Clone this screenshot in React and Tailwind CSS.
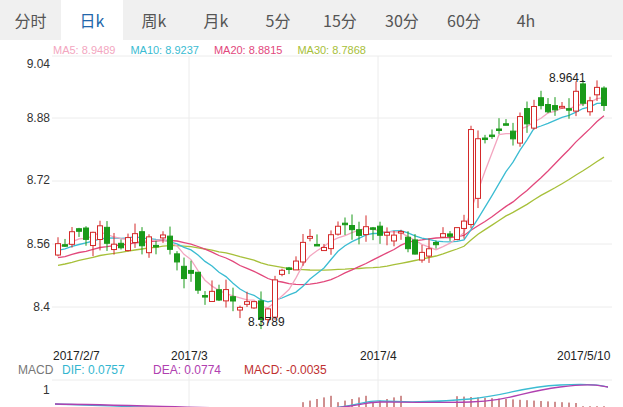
import React from "react";

const keys = [[55,8.57],[90,8.60],[120,8.57],[160,8.585],[175,8.52],[195,8.44],[230,8.42],[262,8.39],[275,8.50],[300,8.56],[340,8.60],[375,8.59],[410,8.57],[425,8.54],[440,8.60],[465,8.62],[472,8.87],[510,8.86],[530,8.92],[560,8.93],[580,8.96],[605,8.955]];
function interp(x){for(let i=0;i<keys.length-1;i++){const[a,pa]=keys[i],[b,pb]=keys[i+1];if(x<=b){return pa+(pb-pa)*(x-a)/(b-a);}}return keys[keys.length-1][1];}
let seed=7;const rnd=()=>{seed=(seed*9301+49297)%233280;return seed/233280;};
const N=79;const xs=[];const closes=[];const opens=[];const highs=[];const lows=[];
for(let i=0;i<N;i++){const x=55+i*7;xs.push(x);const base=interp(x);const c=base+(rnd()-0.5)*0.05;const o=i===0?c-0.03:closes[i-1]+(rnd()-0.5)*0.05;closes.push(c);opens.push(o);highs.push(Math.max(o,c)+rnd()*0.03);lows.push(Math.min(o,c)-rnd()*0.03);}
opens[59]=8.62;closes[59]=8.87;highs[59]=8.88;lows[59]=8.61;
const pre=[];for(let i=0;i<30;i++)pre.push(8.44+i*0.004+(i%3)*0.01);
const all=[...pre,...closes];
const ma=n=>closes.map((_,i)=>{const j=i+30;let s=0;for(let k=j-n+1;k<=j;k++)s+=all[k];return s/n;});
const Y=p=>65+(9.04-p)*379.7;
const line=arr=>arr.map((p,i)=>`${i?"L":"M"}${xs[i]+3},${Y(p).toFixed(1)}`).join(" ");
const tabs=["分时","日k","周k","月k","5分","15分","30分","60分","4h"];

export default function App(){
  const m5=ma(5),m10=ma(10),m20=ma(20),m30=ma(30);
  return(
  <div className="w-[623px] h-[407px] bg-white overflow-hidden relative" style={{fontFamily:'"Microsoft YaHei","Noto Sans CJK SC",sans-serif'}}>
    <div className="h-[40px] bg-[#f0f0f0] flex items-center text-[16px] text-[#555]">
      {tabs.map((t,i)=>(
        <div key={t} className={`h-full flex items-center justify-center ${i===1?"bg-white text-[#2266aa]":""}`} style={{width:i===0?61:62}}>{t}</div>
      ))}
    </div>
    <div className="flex gap-[15px] pl-[53px] pt-[2px] text-[11px] h-[18px]" style={{fontFamily:'"Liberation Sans",Arial,sans-serif'}}>
      <span className="text-[#f3a6c0]">MA5: 8.9489</span>
      <span className="text-[#3bbcd2]">MA10: 8.9237</span>
      <span className="text-[#e2487c]">MA20: 8.8815</span>
      <span className="text-[#a7c03a]">MA30: 8.7868</span>
    </div>
    <svg className="absolute left-0 top-0" width="623" height="407" style={{fontFamily:'"Liberation Sans",Arial,sans-serif'}}>
      {[56,118,181,244,307].map(y=><line key={y} x1="52" x2="612" y1={y} y2={y} stroke="#ececec"/>)}
      {[189,378].map(x=><line key={x} x1={x} x2={x} y1="56" y2="407" stroke="#ececec"/>)}
      <line x1="52" x2="612" y1="380" y2="380" stroke="#ececec"/>
      {[["9.04",68],["8.88",122],["8.72",184],["8.56",248],["8.4",311]].map(([t,y])=><text key={t} x="50" y={y} textAnchor="end" fontSize="12" fill="#333">{t}</text>)}
      <path d={line(m30)} fill="none" stroke="#a7c03a" strokeWidth="1.3"/>
      <path d={line(m20)} fill="none" stroke="#e2487c" strokeWidth="1.3"/>
      <path d={line(m10)} fill="none" stroke="#3bbcd2" strokeWidth="1.3"/>
      <path d={line(m5)} fill="none" stroke="#f3a6c0" strokeWidth="1.3"/>
      {xs.map((x,i)=>{const up=closes[i]>=opens[i];const col=up?"#d42a2a":"#1a9a1a";const top=Y(Math.max(opens[i],closes[i]));const bot=Y(Math.min(opens[i],closes[i]));const h=Math.max(bot-top,1.5);
        return <g key={i}><line x1={x+3} x2={x+3} y1={Y(highs[i])} y2={Y(lows[i])} stroke={col}/>
          <rect x={x+0.5} y={top} width="5" height={h} fill={up?"#fff":col} stroke={col} strokeWidth="1"/></g>;})}
      <text x="248" y="326" fontSize="12" fill="#222">8.3789</text>
      <text x="549" y="82" fontSize="12" fill="#222">8.9641</text>
      <g fontSize="12" fill="#222">
        <text x="53" y="360">2017/2/7</text><text x="171" y="360">2017/3</text><text x="360" y="360">2017/4</text><text x="557" y="360">2017/5/10</text>
      </g>
      <g fontSize="12">
        <text x="18" y="374" fill="#777">MACD</text><text x="62" y="374" fill="#33b6d0">DIF: 0.0757</text>
        <text x="153" y="374" fill="#b040b0">DEA: 0.0774</text><text x="244" y="374" fill="#c03030">MACD: -0.0035</text>
        <text x="43" y="394" fill="#333">1</text>
      </g>
      {xs.map((x,i)=>{const v=i<35?-2-(i%4):i<50?6+(i%5)*2:i<57?-3:i<75?12-(i-60)*0.5:1;return <line key={"m"+i} x1={x+3} x2={x+3} y1={407-Math.max(v,0)*0.8} y2="407" stroke={v>0?"#a02020":"#1a9a1a"}/>;})}
      <path d="M55,404 C120,406 200,410 280,410 S360,400 380,401 S430,403 470,399 S520,387 560,385 S600,386 608,387" fill="none" stroke="#3bbcd2" strokeWidth="1.3"/>
      <path d="M55,404 C130,405 200,408 280,409 S360,402 380,402 S430,403 470,402 S520,392 560,387 S600,387 608,387" fill="none" stroke="#b040b0" strokeWidth="1.3"/>
    </svg>
  </div>);
}
